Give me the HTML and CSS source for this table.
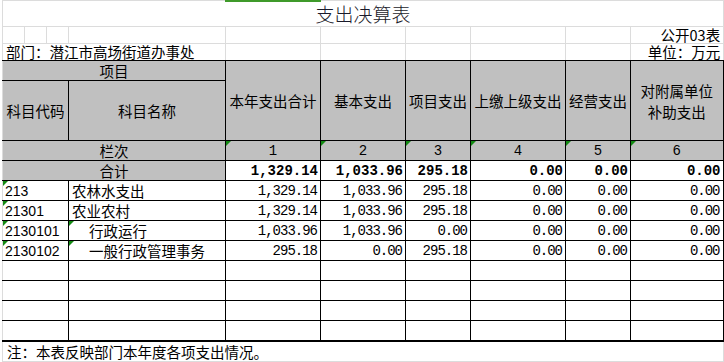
FILE: index.html
```html
<!DOCTYPE html>
<html lang="zh-CN">
  <head>
    <meta charset="UTF-8" />
    <meta name="viewport" content="width=device-width, initial-scale=1.0" />
    <title>支出决算表</title>
    <link rel="stylesheet" href="styles.css">
  </head>
  <body>
    <div class="sheet">
      <!-- selected column marker -->
      <div class="selbar"></div>

      <table class="top">
        <colgroup>
          <col class="c-a"><col class="c-a"><col class="c-a">
          <col class="c-name"><col class="c-total"><col class="c-base">
          <col class="c-proj"><col class="c-up"><col class="c-biz"><col class="c-sub">
        </colgroup>
        <tr class="r-title">
          <td colspan="10" class="title">支出决算表</td>
        </tr>
        <tr class="r-small">
          <td></td><td></td><td></td><td></td><td></td><td></td><td></td><td></td><td></td>
          <td class="right">公开03表</td>
        </tr>
        <tr class="r-small">
          <td colspan="4">部门：潜江市高场街道办事处</td>
          <td></td><td></td><td></td><td></td><td></td>
          <td class="right">单位：万元</td>
        </tr>
      </table>

      <table class="report">
        <colgroup>
          <col class="c-code"><col class="c-name"><col class="c-total"><col class="c-base">
          <col class="c-proj"><col class="c-up"><col class="c-biz"><col class="c-sub">
        </colgroup>
        <tr class="r-head1">
          <td colspan="2" class="hd">项目</td>
          <td rowspan="2" class="hd">本年支出合计</td>
          <td rowspan="2" class="hd">基本支出</td>
          <td rowspan="2" class="hd">项目支出</td>
          <td rowspan="2" class="hd">上缴上级支出</td>
          <td rowspan="2" class="hd">经营支出</td>
          <td rowspan="2" class="hd two-line">对附属单位<br>补助支出</td>
        </tr>
        <tr class="r-head2">
          <td class="hd">科目代码</td>
          <td class="hd">科目名称</td>
        </tr>
        <tr class="r-row">
          <td colspan="2" class="hd">栏次</td>
          <td class="hd num-c mark">1</td>
          <td class="hd num-c mark">2</td>
          <td class="hd num-c mark">3</td>
          <td class="hd num-c mark">4</td>
          <td class="hd num-c mark">5</td>
          <td class="hd num-c mark">6</td>
        </tr>
        <tr class="r-row">
          <td colspan="2" class="hd">合计</td>
          <td class="num bold">1,329.14</td>
          <td class="num bold">1,033.96</td>
          <td class="num bold">295.18</td>
          <td class="num bold">0.00</td>
          <td class="num bold">0.00</td>
          <td class="num bold">0.00</td>
        </tr>
        <tr class="r-row">
          <td class="code mark">213</td>
          <td>农林水支出</td>
          <td class="num">1,329.14</td>
          <td class="num">1,033.96</td>
          <td class="num">295.18</td>
          <td class="num">0.00</td>
          <td class="num">0.00</td>
          <td class="num">0.00</td>
        </tr>
        <tr class="r-row">
          <td class="code mark">21301</td>
          <td>农业农村</td>
          <td class="num">1,329.14</td>
          <td class="num">1,033.96</td>
          <td class="num">295.18</td>
          <td class="num">0.00</td>
          <td class="num">0.00</td>
          <td class="num">0.00</td>
        </tr>
        <tr class="r-row">
          <td class="code mark">2130101</td>
          <td class="indent mark">行政运行</td>
          <td class="num">1,033.96</td>
          <td class="num">1,033.96</td>
          <td class="num">0.00</td>
          <td class="num">0.00</td>
          <td class="num">0.00</td>
          <td class="num">0.00</td>
        </tr>
        <tr class="r-row">
          <td class="code mark">2130102</td>
          <td class="indent mark">一般行政管理事务</td>
          <td class="num">295.18</td>
          <td class="num">0.00</td>
          <td class="num">295.18</td>
          <td class="num">0.00</td>
          <td class="num">0.00</td>
          <td class="num">0.00</td>
        </tr>
        <tr class="r-row"><td></td><td></td><td></td><td></td><td></td><td></td><td></td><td></td></tr>
        <tr class="r-row"><td></td><td></td><td></td><td></td><td></td><td></td><td></td><td></td></tr>
        <tr class="r-row"><td></td><td></td><td></td><td></td><td></td><td></td><td></td><td></td></tr>
        <tr class="r-row"><td></td><td></td><td></td><td></td><td></td><td></td><td></td><td></td></tr>
      </table>

      <table class="foot">
        <colgroup>
          <col class="c-a"><col class="c-a"><col class="c-a">
          <col class="c-name"><col class="c-total"><col class="c-base">
          <col class="c-proj"><col class="c-up"><col class="c-biz"><col class="c-sub">
        </colgroup>
        <tr class="r-note">
          <td colspan="10">注：本表反映部门本年度各项支出情况。</td>
        </tr>
        <tr class="r-tail">
          <td></td><td></td><td></td><td></td><td></td><td></td><td></td><td></td><td></td><td></td>
        </tr>
      </table>
    </div>
  </body>
</html>
```

FILE: styles.css
```css
body {
  margin: 0;
  background-color: #fff;
  color: #000;
  font-family: "Noto Sans CJK SC", sans-serif;
  font-size: 14.5px;
}

.sheet {
  position: relative;
  margin-left: 2px;
  width: 721px;
}

.selbar {
  position: absolute;
  top: 0;
  left: 223px;
  width: 96px;
  height: 2px;
  background-color: #3f9a2a;
}

table {
  width: 721px;
  table-layout: fixed;
  border-collapse: collapse;
}

td {
  padding: 0 3px;
  line-height: 16px;
  white-space: nowrap;
  overflow: hidden;
}

/* column widths */
.c-a { width: 22px; }
.c-code { width: 66px; }
.c-name { width: 157px; }
.c-total { width: 95px; }
.c-base { width: 85px; }
.c-proj { width: 65px; }
.c-up { width: 95px; }
.c-biz { width: 65px; }
.c-sub { width: 93px; }

/* sheet rows above the report */
.top td {
  border-top: 1px solid #dcdcdc;
  border-right: 1px solid #dcdcdc;
  border-left: 1px solid #dcdcdc;
  overflow: visible;
}

.r-title td {
  height: 25px;
}

.r-small td {
  height: 16px;
}

.title {
  text-align: center;
  font-size: 19px;
  font-weight: 300;
  color: #1a1a2a;
  line-height: 24px;
}

.right {
  text-align: right;
}

/* report table */
.report {
  border-top: 1px solid #000;
  border-left: 1px solid #dcdcdc;
  border-right: 2px solid #000;
  border-bottom: 2px solid #000;
}

.report td {
  border: 1px solid #000;
  position: relative;
}

.report td:first-child {
  border-left: 1px solid #dcdcdc;
}

.r-head1 td {
  height: 19px;
}

.r-head2 td {
  height: 59px;
}

.r-row td {
  height: 19px;
}

.hd {
  background-color: #c0c0c0;
  text-align: center;
  line-height: 18px;
}

.hd.two-line {
  line-height: 21px;
}

.num,
.num-c {
  font-family: "Liberation Mono", monospace;
  font-size: 14px;
}

.num {
  text-align: right;
  padding-right: 3px;
  letter-spacing: -1px;
}

.num.bold {
  font-weight: bold;
  letter-spacing: 0;
  padding-right: 2px;
}

.code {
  font-family: "Liberation Sans", sans-serif;
  font-size: 14px;
  padding-left: 2px;
}

.indent {
  padding-left: 20px;
}

.mark::before {
  content: "";
  position: absolute;
  top: 0;
  left: 0;
  border-top: 5px solid #138a13;
  border-right: 5px solid transparent;
}

/* note row under the report */
.foot td {
  border-right: 1px solid #dcdcdc;
  border-left: 1px solid #dcdcdc;
}

.r-note td {
  height: 19px;
  border-bottom: 1px solid #dcdcdc;
  padding-left: 4px;
}

.r-tail td {
  height: 2px;
}
```
